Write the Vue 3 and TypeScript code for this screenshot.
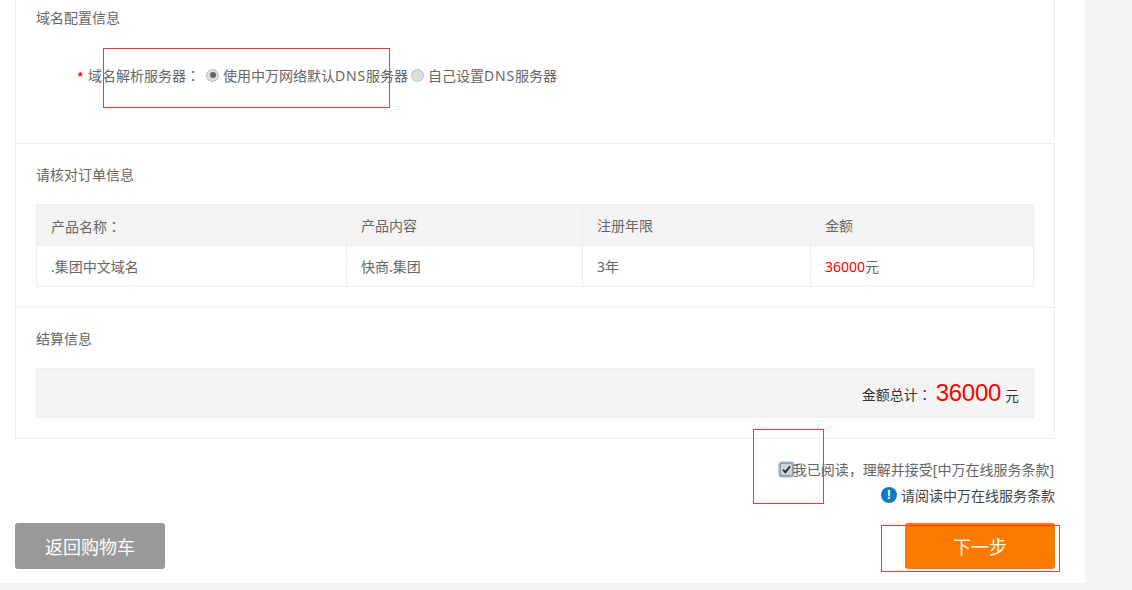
<script setup lang="ts">
interface OrderRow { name: string; content: string; years: string; price: string; unit: string }
const columns: string[] = ['产品内容', '注册年限', '金额']
const rows: OrderRow[] = [{ name: '.集团中文域名', content: '快商.集团', years: '3年', price: '36000', unit: '元' }]
</script>

<template>
  <div class="page">
    <main class="main">
      <div class="panel">
        <section class="sec sec-config">
          <h3 class="title">域名配置信息</h3>
          <div class="dns">
            <span class="star">*</span>
            <span class="dns-label">域名解析服务器<span class="tc">：</span></span>
            <span class="radio on"><i></i></span>
            <span class="opt">使用中万网络默认<span class="abbr">DNS</span>服务器</span>
            <span class="radio second"></span>
            <span class="opt">自己设置<span class="abbr">DNS</span>服务器</span>
          </div>
        </section>
        <section class="sec sec-order">
          <h3 class="title">请核对订单信息</h3>
          <table class="table">
            <thead>
              <tr>
                <th>产品名称<span class="tc">：</span></th>
                <th v-for="c in columns" :key="c">{{ c }}</th>
              </tr>
            </thead>
            <tbody>
              <tr v-for="r in rows" :key="r.name">
                <td>{{ r.name }}</td>
                <td>{{ r.content }}</td>
                <td>{{ r.years }}</td>
                <td><span class="red">{{ r.price }}</span>{{ r.unit }}</td>
              </tr>
            </tbody>
          </table>
        </section>
        <section class="sec sec-pay">
          <h3 class="title">结算信息</h3>
          <div class="total">
            <span class="total-label">金额总计<span class="tc">：</span></span>
            <span class="total-num">36000</span>
            <span class="total-unit">元</span>
          </div>
        </section>
      </div>

      <div class="agree">
        <span class="check">
          <svg width="9" height="9" viewBox="0 0 9 9"><path d="M1 4.6 3.4 7.2 8 1.4" fill="none" stroke="#333" stroke-width="2"/></svg>
        </span>
        <span>我已阅读，理解并接受[中万在线服务条款]</span>
      </div>
      <div class="notice">
        <span class="info">!</span>
        <span>请阅读中万在线服务条款</span>
      </div>
      <div class="actions">
        <button class="btn back" type="button">返回购物车</button>
        <button class="btn next" type="button">下一步</button>
      </div>

      <div class="frame frame-a"></div>
      <div class="frame frame-b"></div>
      <div class="frame frame-c"></div>
    </main>
  </div>
</template>

<style>
html, body { margin: 0; background: #f4f4f4; overflow: hidden; }
</style>

<style scoped>
.page {
  width: 1132px;
  height: 590px;
  background: #f4f4f4;
  font-family: "Noto Sans", "Noto Sans CJK SC", sans-serif;
  font-size: 14px;
  color: #666;
  overflow: hidden;
}
.main {
  position: relative;
  width: 1085px;
  height: 583px;
  box-sizing: border-box;
  padding: 0 30px 0 15px;
  background: #fff;
}
.panel {
  height: 439px;
  box-sizing: border-box;
  border: 1px solid #eee;
  border-top: 0;
}
.tc { font-family: "Noto Sans CJK TC", sans-serif; }
.sec { padding: 0 20px; box-sizing: border-box; border-bottom: 1px solid #eee; }
.sec-config { height: 144px; padding-top: 7px; }
.sec-order { height: 164px; padding-top: 20px; }
.sec-pay { height: 131px; padding-top: 20px; border-bottom: 0; }
.title { margin: 0; font-size: 14px; font-weight: 400; line-height: 22px; height: 22px; }
.dns {
  display: flex;
  align-items: center;
  height: 22px;
  margin-top: 35px;
  padding-left: 41px;
}
.star {
  width: 11px;
  padding: 3px 0 0 1px;
  box-sizing: border-box;
  color: #f00;
  font-family: "Liberation Sans", sans-serif;
  font-weight: 700;
  font-size: 12px;
  line-height: 22px;
}
.dns-label { width: 118px; }
.opt { white-space: nowrap; }
.abbr { letter-spacing: 0.8px; }
.radio {
  flex: none;
  width: 11px;
  height: 11px;
  margin-right: 4px;
  border: 1px solid #bbb;
  border-radius: 50%;
  background: #ddd;
  display: flex;
  align-items: center;
  justify-content: center;
}
.radio i { width: 6px; height: 6px; border-radius: 50%; background: #666; }
.radio.second { margin-left: 3px; }
.table {
  width: 998px;
  height: 83px;
  margin-top: 18px;
  border-collapse: collapse;
  table-layout: fixed;
}
.table th, .table td {
  border: 1px solid #eee;
  padding: 2px 14px 0;
  height: 41px;
  box-sizing: border-box;
  text-align: left;
  font-weight: 400;
  font-size: 14px;
  line-height: 20px;
}
.table th { background: #f4f4f4; }
.table th:nth-child(1) { width: 310px; }
.table th:nth-child(2) { width: 236px; }
.table th:nth-child(3) { width: 228px; }
.red { color: #f00; }
.total {
  height: 50px;
  box-sizing: border-box;
  margin-top: 18px;
  padding: 9px 14px 0 0;
  border: 1px solid #eee;
  background: #f4f4f4;
  color: #333;
  line-height: 30px;
  text-align: right;
  white-space: nowrap;
}
.total-label { vertical-align: 1px; }
.total-num {
  margin: 0 4px;
  font-family: "Liberation Sans", sans-serif;
  font-size: 24px;
  letter-spacing: -0.3px;
  color: #f00;
}
.agree, .notice {
  display: flex;
  justify-content: flex-end;
  align-items: center;
  height: 22px;
  white-space: nowrap;
}
.agree { margin-top: 19px; padding-right: 1px; }
.notice { margin-top: 4px; color: #444; }
.check {
  width: 11px;
  height: 11px;
  border: 1px solid #999;
  border-radius: 2px;
  background: #d4d4d4;
  box-shadow: 0 0 0 1.5px #8fb0ea;
  display: flex;
  align-items: center;
  justify-content: center;
}
.info {
  width: 16px;
  height: 16px;
  margin-right: 4px;
  border-radius: 50%;
  background: #0f7bc4;
  color: #fff;
  font-family: "Liberation Sans", sans-serif;
  font-weight: 700;
  font-size: 13px;
  line-height: 16px;
  text-align: center;
}
.actions {
  display: flex;
  justify-content: space-between;
  margin-top: 17px;
}
.btn {
  width: 150px;
  height: 46px;
  padding: 0;
  border: 0;
  border-radius: 3px;
  color: #fff;
  font-family: inherit;
  font-size: 18px;
}
.back { background: #999; }
.next { background: #ff7a00; }
.frame { position: absolute; box-sizing: border-box; border: 1px solid #f33; pointer-events: none; }
.frame-a { left: 103px; top: 48px; width: 287px; height: 60px; }
.frame-b { left: 753px; top: 429px; width: 71px; height: 75px; }
.frame-c { left: 881px; top: 525px; width: 179px; height: 47px; }
</style>
